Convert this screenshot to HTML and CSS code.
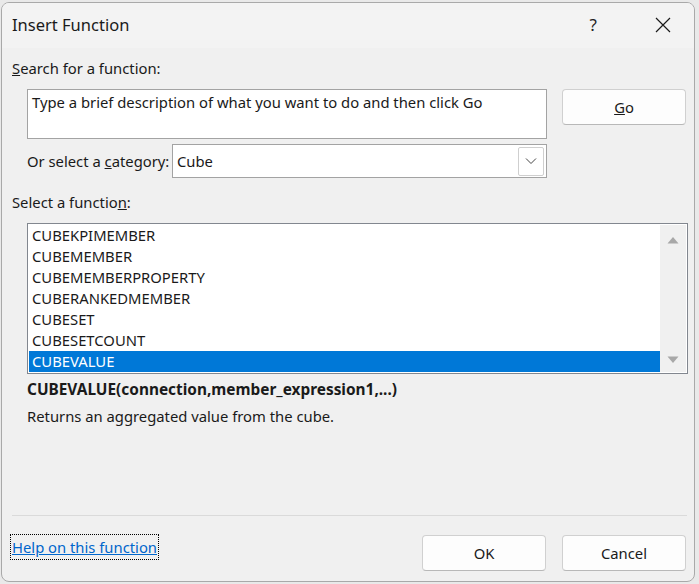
FILE: index.html
```html
<!DOCTYPE html>
<html>
<head>
<meta charset="utf-8">
<link rel="stylesheet" href="styles.css">
</head>
<body>
<div class="dialog">
  <div class="titlebar">
    <span class="title">Insert Function</span>
    <span class="help">?</span>
    <svg class="close" width="16" height="16" viewBox="0 0 16 16"><path d="M1 1L15 15M15 1L1 15" stroke="#1a1a1a" stroke-width="1.2" fill="none"/></svg>
  </div>
  <div class="content">
    <div class="label lbl-search"><u>S</u>earch for a function:</div>
    <div class="search-row">
      <div class="searchbox">Type a brief description of what you want to do and then click Go</div>
      <div class="btn btn-go"><u>G</u>o</div>
    </div>
    <div class="cat-row">
      <span class="cat-label">Or select a <u>c</u>ategory:</span>
      <div class="combo">
        <span class="combo-val">Cube</span>
        <span class="combo-btn"><svg width="12" height="8" viewBox="0 0 12 8"><path d="M1 1.5L6 6.5L11 1.5" stroke="#444" stroke-width="1" fill="none"/></svg></span>
      </div>
    </div>
    <div class="label lbl-select">Select a functio<u>n</u>:</div>
    <div class="listbox">
      <div class="items">
        <div class="item">CUBEKPIMEMBER</div>
        <div class="item">CUBEMEMBER</div>
        <div class="item">CUBEMEMBERPROPERTY</div>
        <div class="item">CUBERANKEDMEMBER</div>
        <div class="item">CUBESET</div>
        <div class="item">CUBESETCOUNT</div>
        <div class="item selected">CUBEVALUE</div>
      </div>
      <div class="scrollbar">
        <svg width="12" height="8" viewBox="0 0 12 8"><path d="M0.5 7.5L6 1L11.5 7.5Z" fill="#a8a8a8"/></svg>
        <svg width="12" height="8" viewBox="0 0 12 8"><path d="M0.5 0.5L6 7L11.5 0.5Z" fill="#a8a8a8"/></svg>
      </div>
    </div>
    <div class="signature">CUBEVALUE(connection,member_expression1,...)</div>
    <div class="desc">Returns an aggregated value from the cube.</div>
    <div class="spacer"></div>
    <div class="separator"></div>
    <div class="footer">
      <span class="helplink"><span class="link">Help on this function</span></span>
      <div class="btn btn-ok">OK</div>
      <div class="btn btn-cancel">Cancel</div>
    </div>
  </div>
</div>
</body>
</html>
```

FILE: styles.css
```css
html, body {
  margin: 0;
  padding: 0;
}
body {
  width: 699px;
  height: 584px;
  background: #e9e9e9;
  font-family: "Noto Sans", "Open Sans", sans-serif;
  font-size: 14.8px;
  color: #1a1a1a;
  overflow: hidden;
}
.dialog {
  box-sizing: border-box;
  margin: 2px 4px 0 1px;
  width: 694px;
  height: 580px;
  border: 1px solid #a9a9a9;
  border-radius: 8px;
  background: #f0f0f0;
  display: flex;
  flex-direction: column;
  overflow: hidden;
}
.titlebar {
  height: 45px;
  flex: none;
  background: #f3f3f3;
  display: flex;
  align-items: center;
  padding-left: 10px;
}
.title {
  font-size: 16.5px;
  flex: 1;
  margin-top: -2px;
}
.help {
  font-size: 17px;
  margin-right: 58px;
  margin-top: -2px;
  color: #222;
}
.close {
  margin-right: 23px;
  margin-top: -2px;
}
.content {
  flex: 1;
  display: flex;
  flex-direction: column;
  padding: 0 8px 0 10px;
}
.label {
  height: 20px;
  line-height: 20px;
}
.lbl-search {
  margin-top: 10px;
}
.search-row {
  display: flex;
  margin-top: 11px;
  margin-left: 15px;
  gap: 15px;
  align-items: flex-start;
}
.searchbox {
  box-sizing: border-box;
  width: 520px;
  height: 50px;
  background: #fff;
  border: 1px solid #a3a3a3;
  padding: 2px 4px;
  line-height: 20px;
}
.btn {
  box-sizing: border-box;
  width: 124px;
  height: 36px;
  background: #fdfdfd;
  border: 1px solid #d0d0d0;
  border-bottom-color: #b8b8b8;
  border-radius: 4px;
  display: flex;
  align-items: center;
  justify-content: center;
}
.btn-go {
  height: 36px;
}
.cat-row {
  display: flex;
  align-items: center;
  margin-top: 5px;
  margin-left: 15px;
}
.cat-label {
  width: 145px;
}
.combo {
  box-sizing: border-box;
  width: 375px;
  height: 34px;
  background: #fff;
  border: 1px solid #a3a3a3;
  display: flex;
  align-items: center;
  padding-left: 4px;
}
.combo-val {
  flex: 1;
}
.combo-btn {
  box-sizing: border-box;
  width: 26px;
  height: 29px;
  margin-right: 2px;
  border: 1px solid #cfcfcf;
  border-radius: 2px;
  display: flex;
  align-items: center;
  justify-content: center;
}
.lbl-select {
  margin-top: 14px;
}
.listbox {
  box-sizing: border-box;
  margin-top: 11px;
  margin-left: 15px;
  width: 661px;
  height: 151px;
  border: 1px solid #82878f;
  background: #fff;
  padding: 1px;
  display: flex;
}
.items {
  flex: 1;
}
.item {
  height: 21px;
  line-height: 21px;
  padding-left: 3px;
}
.item.selected {
  background: #0078d7;
  color: #fff;
}
.scrollbar {
  width: 26px;
  background: #f0f0f0;
  display: flex;
  flex-direction: column;
  justify-content: space-between;
  align-items: center;
  padding: 11px 0 8px;
}
.signature {
  margin-top: 6px;
  margin-left: 15px;
  font-weight: bold;
  font-size: 15.4px;
  line-height: 20px;
}
.desc {
  margin-top: 6px;
  margin-left: 15px;
  line-height: 20px;
}
.spacer {
  flex: 1;
}
.separator {
  height: 1px;
  background: #dadada;
  width: 675px;
}
.footer {
  display: flex;
  align-items: flex-start;
  margin-top: 19px;
  margin-bottom: 10px;
  gap: 16px;
}
.helplink {
  flex: 1;
}
.link {
  display: inline-block;
  color: #0066cc;
  text-decoration: underline;
  outline: 1px dotted #000;
  outline-offset: 0;
  padding: 0 1px;
  margin-left: -1px;
  line-height: 24px;
}
```
